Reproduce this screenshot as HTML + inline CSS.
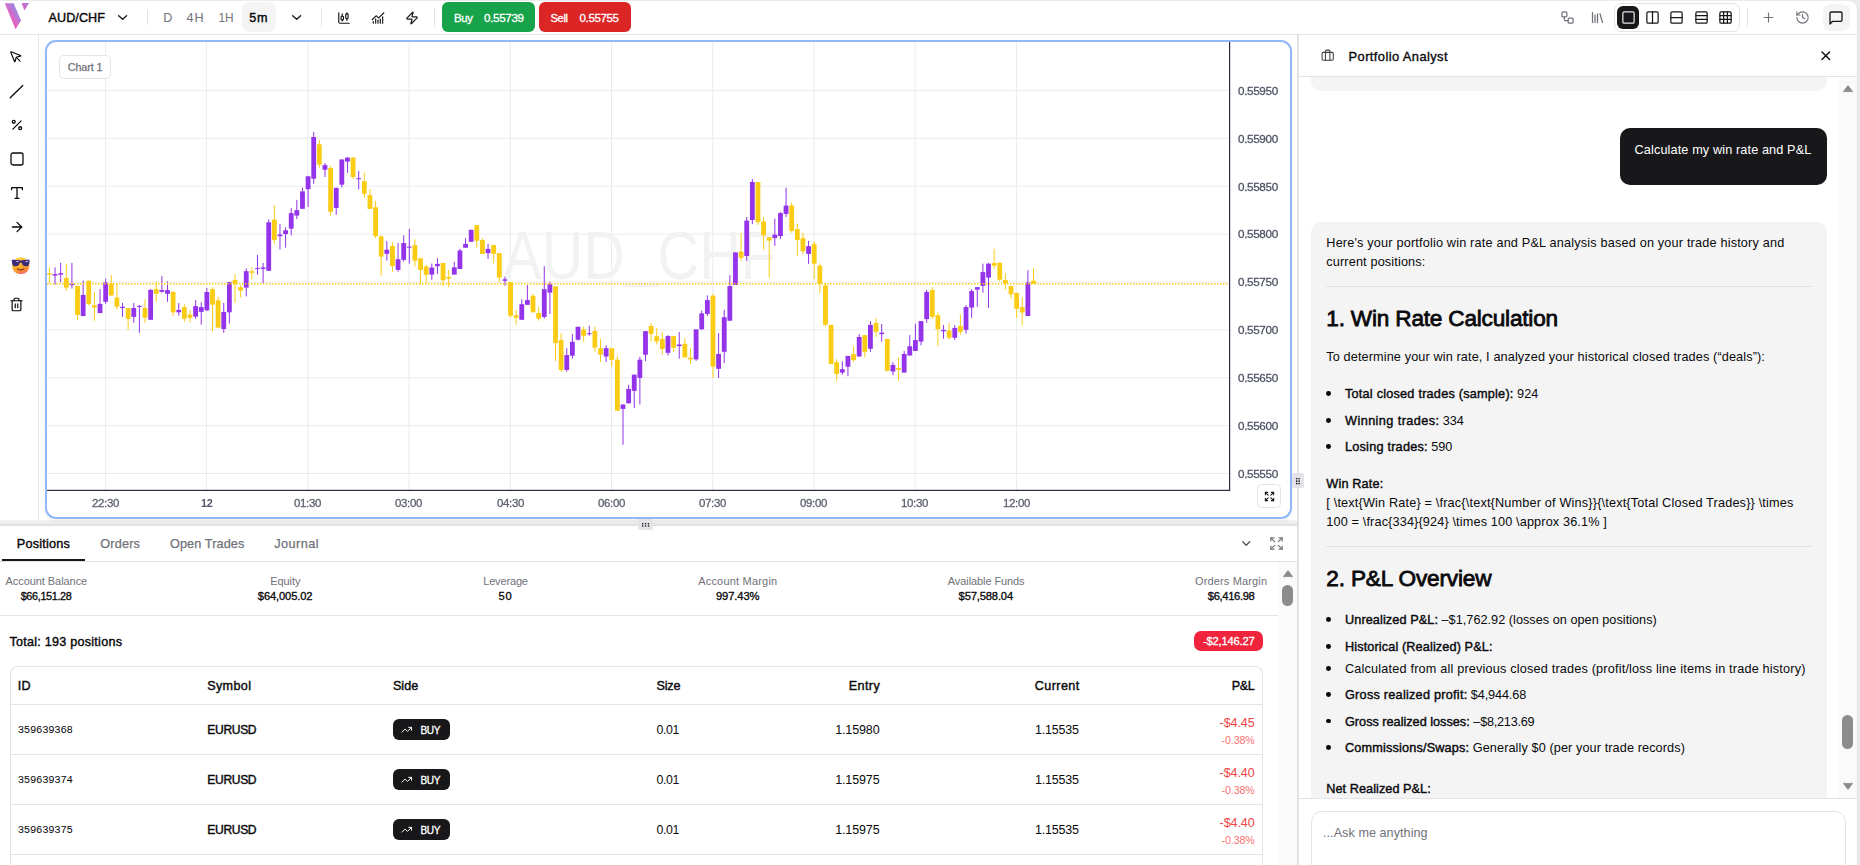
<!DOCTYPE html>
<html>
<head>
<meta charset="utf-8">
<title>Trading</title>
<style>
*{box-sizing:border-box;margin:0;padding:0}
html,body{width:1860px;height:865px;overflow:hidden;background:#ebebeb;font-family:"Liberation Sans",sans-serif;color:#09090b}
.abs{position:absolute}
#app{position:absolute;left:0;top:1px;width:1858px;height:880px;background:#fff;border-right:1px solid #e2e2e4;border-radius:0 9px 0 0;overflow:hidden}
#in{position:absolute;left:0;top:-1px;width:1858px;height:880px}
.t{position:absolute;white-space:pre;line-height:1}
svg{position:absolute;overflow:visible}
#hdr{position:absolute;left:0;top:0;width:1858px;height:35px;border-bottom:1px solid #e4e4e7;background:#fff}
.vsep{position:absolute;width:1px;background:#e4e4e7}
#ltb{position:absolute;left:0;top:34px;width:39px;height:490px;border-right:1px solid #e4e4e7}
#chartbox{position:absolute;left:45px;top:40px;width:1247px;height:479px;border:2px solid #8fb7f9;border-radius:11px;background:#fff;box-shadow:0 2px 4px rgba(0,0,0,.06)}
#hsplit{position:absolute;left:0;top:520px;width:1298px;height:6px;background:linear-gradient(#f3f3f4 0%,#ededee 50%,#e3e3e6 75%,#e1e1e4 100%)}
#vsplit{position:absolute;left:1297.2px;top:35px;width:1.8px;height:840px;background:#e2e2e6}
.grip{position:absolute;background:#e4e4e7;border-radius:2px}
</style>
</head>
<body>
<div id="app"><div id="in">
<div id="hdr">
<svg style="left:4px;top:2.2px" width="26" height="28" viewBox="0 0 26 28"><defs><linearGradient id="lg" x1="0" y1="1" x2="1" y2="0"><stop offset="0" stop-color="#ff4fa8"/><stop offset=".45" stop-color="#e066c4"/><stop offset="1" stop-color="#5aa2ff"/></linearGradient><linearGradient id="lg2" x1="0" y1="1" x2="1" y2="0"><stop offset="0" stop-color="#f35fb6"/><stop offset="1" stop-color="#a07ae8"/></linearGradient></defs><path d="M0.8 1.2 L9.6 1.2 L17 18.6 L11.5 27.2 Z" fill="url(#lg)"/><path d="M17.6 1 L25 1 L20.4 8.6 Z" fill="url(#lg2)"/></svg>
<span class="t" style="top:11px;line-height:14px;font-size:12.6px;left:48.50px;color:#09090b;-webkit-text-stroke:0.4px #09090b;letter-spacing:0.084px;">AUD/CHF</span>
<svg style="left:117.9px;top:15px" width="10" height="6" viewBox="0 0 10 6" fill="none" stroke="#18181b" stroke-width="1.35" stroke-linecap="round" stroke-linejoin="round"><path d="M0.7 0.7l3.95 3.6 3.95-3.600"/></svg>
<div class="vsep" style="left:147px;top:10px;height:15px"></div>
<span class="t" style="top:11px;line-height:14px;font-size:12.6px;left:163.20px;color:#71717a;">D</span>
<span class="t" style="top:11px;line-height:14px;font-size:12.6px;left:186.60px;color:#71717a;letter-spacing:0.793px;">4H</span>
<span class="t" style="top:11px;line-height:14px;font-size:11.9px;left:218.60px;color:#71717a;letter-spacing:-0.312px;">1H</span>
<div class="abs" style="left:242px;top:2px;width:34px;height:30px;background:#f4f4f5;border-radius:8px;"></div>
<span class="t" style="top:11px;line-height:14px;font-size:12.6px;left:249.30px;color:#09090b;-webkit-text-stroke:0.4px #09090b;letter-spacing:0.696px;">5m</span>
<svg style="left:292.3px;top:15px" width="10" height="6" viewBox="0 0 10 6" fill="none" stroke="#18181b" stroke-width="1.35" stroke-linecap="round" stroke-linejoin="round"><path d="M0.7 0.7l3.95 3.6 3.95-3.600"/></svg>
<div class="vsep" style="left:321px;top:8px;height:19px"></div>
<svg style="left:337px;top:10.5px" width="14" height="14" viewBox="0 0 24 24" fill="none" stroke="#18181b" stroke-width="2" stroke-linecap="round" stroke-linejoin="round" ><path d="M9 5v4"/><rect width="4" height="6" x="7" y="9" rx="1"/><path d="M9 15v2"/><path d="M17 3v2"/><rect width="4" height="8" x="15" y="5" rx="1"/><path d="M17 13v3"/><path d="M3 3v16a2 2 0 0 0 2 2h16"/></svg>
<svg style="left:371px;top:10.5px" width="14" height="14" viewBox="0 0 24 24" fill="none" stroke="#18181b" stroke-width="2" stroke-linecap="round" stroke-linejoin="round" ><path d="M12 16v5"/><path d="M16 14v7"/><path d="M20 10v11"/><path d="m22 3-8.646 8.646a.5.5 0 0 1-.708 0L9.354 8.354a.5.5 0 0 0-.707 0L2 15"/><path d="M4 18v3"/><path d="M8 14v7"/></svg>
<svg style="left:405px;top:10.5px" width="14" height="14" viewBox="0 0 24 24" fill="none" stroke="#18181b" stroke-width="2" stroke-linecap="round" stroke-linejoin="round" ><path d="M4 14a1 1 0 0 1-.78-1.63l9.9-10.2a.5.5 0 0 1 .86.46l-1.92 6.02A1 1 0 0 0 13 10h7a1 1 0 0 1 .78 1.63l-9.9 10.2a.5.5 0 0 1-.86-.46l1.92-6.02A1 1 0 0 0 11 14z"/></svg>
<div class="vsep" style="left:434px;top:8px;height:19px"></div>
<div class="abs" style="left:442px;top:2px;width:93px;height:30px;background:#16a34a;border-radius:6px;"></div>
<span class="t" style="top:12px;line-height:12px;font-size:11.4px;left:454.00px;color:#fff;-webkit-text-stroke:0.32px #fff;letter-spacing:-0.322px;">Buy</span>
<span class="t" style="top:12px;line-height:12px;font-size:11.6px;left:484.00px;color:#fff;-webkit-text-stroke:0.32px #fff;letter-spacing:-0.322px;">0.55739</span>
<div class="abs" style="left:539px;top:2px;width:92px;height:30px;background:#dc2626;border-radius:6px;"></div>
<span class="t" style="top:12px;line-height:12px;font-size:11.1px;left:550.50px;color:#fff;-webkit-text-stroke:0.32px #fff;letter-spacing:-0.336px;">Sell</span>
<span class="t" style="top:12px;line-height:12px;font-size:11.5px;left:579.50px;color:#fff;-webkit-text-stroke:0.32px #fff;letter-spacing:-0.345px;">0.55755</span>
<svg style="left:1560px;top:10px" width="15" height="15" viewBox="0 0 24 24" fill="none" stroke="#71717a" stroke-width="2" stroke-linecap="round" stroke-linejoin="round" ><rect width="8" height="8" x="3" y="3" rx="2"/><path d="M7 11v4a2 2 0 0 0 2 2h4"/><rect width="8" height="8" x="13" y="13" rx="2"/></svg>
<svg style="left:1590px;top:10px" width="15" height="15" viewBox="0 0 24 24" fill="none" stroke="#71717a" stroke-width="2" stroke-linecap="round" stroke-linejoin="round" ><path d="m16 6 4 14"/><path d="M12 6v14"/><path d="M8 8v12"/><path d="M4 4v16"/></svg>
<div class="abs" style="left:1614px;top:3px;width:126px;height:29px;border-radius:7px;border:1px solid #e4e4e7;"></div>
<div class="abs" style="left:1617px;top:6px;width:22px;height:23px;background:#18181b;border-radius:6px;"></div>
<svg style="left:1621px;top:10px" width="15" height="15" viewBox="0 0 24 24" fill="none" stroke="#e4e4e7" stroke-width="2" stroke-linecap="round" stroke-linejoin="round" ><rect width="18" height="18" x="3" y="3" rx="2"/></svg>
<svg style="left:1645px;top:10px" width="15" height="15" viewBox="0 0 24 24" fill="none" stroke="#18181b" stroke-width="2" stroke-linecap="round" stroke-linejoin="round" ><rect width="18" height="18" x="3" y="3" rx="2"/><path d="M12 3v18"/></svg>
<svg style="left:1669px;top:10px" width="15" height="15" viewBox="0 0 24 24" fill="none" stroke="#18181b" stroke-width="2" stroke-linecap="round" stroke-linejoin="round" ><rect width="18" height="18" x="3" y="3" rx="2"/><path d="M3 12h18"/></svg>
<svg style="left:1694px;top:10px" width="15" height="15" viewBox="0 0 24 24" fill="none" stroke="#18181b" stroke-width="2" stroke-linecap="round" stroke-linejoin="round" ><rect width="18" height="18" x="3" y="3" rx="2"/><path d="M21 9H3"/><path d="M21 15H3"/></svg>
<svg style="left:1718px;top:10px" width="15" height="15" viewBox="0 0 24 24" fill="none" stroke="#18181b" stroke-width="2" stroke-linecap="round" stroke-linejoin="round" ><rect width="18" height="18" x="3" y="3" rx="2"/><path d="M3 9h18"/><path d="M3 15h18"/><path d="M9 3v18"/><path d="M15 3v18"/></svg>
<div class="vsep" style="left:1747px;top:8px;height:19px"></div>
<svg style="left:1761px;top:10px" width="15" height="15" viewBox="0 0 24 24" fill="none" stroke="#71717a" stroke-width="1.8" stroke-linecap="round" stroke-linejoin="round" ><path d="M5 12h14"/><path d="M12 5v14"/></svg>
<svg style="left:1794.5px;top:10px" width="15" height="15" viewBox="0 0 24 24" fill="none" stroke="#71717a" stroke-width="1.8" stroke-linecap="round" stroke-linejoin="round" ><path d="M3 12a9 9 0 1 0 9-9 9.75 9.75 0 0 0-6.740 2.740L3 8"/><path d="M3 3v5h5"/><path d="M12 7v5l4 2"/></svg>
<div class="abs" style="left:1823px;top:4px;width:27px;height:27px;background:#f4f4f5;border-radius:8px;"></div>
<svg style="left:1828px;top:10px" width="16" height="16" viewBox="0 0 24 24" fill="none" stroke="#18181b" stroke-width="2" stroke-linecap="round" stroke-linejoin="round" ><path d="M21 15a2 2 0 0 1-2 2H7l-4 4V5a2 2 0 0 1 2-2h14a2 2 0 0 1 2 2z"/></svg>
</div>
<div id="ltb">
<svg style="left:9px;top:16px" width="14" height="14" viewBox="0 0 24 24" fill="none" stroke="#09090b" stroke-width="2" stroke-linecap="round" stroke-linejoin="round" ><path d="M12.586 12.586 19 19"/><path d="M3.688 3.037a.497.497 0 0 0-.651.651l6.5 15.999a.501.501 0 0 0 .947-.062l1.569-6.083a2 2 0 0 1 1.448-1.479l6.124-1.579a.5.5 0 0 0 .063-.947z"/></svg>
<svg style="left:9px;top:50px" width="15" height="15" viewBox="0 0 15 15" fill="none" stroke="#09090b" stroke-width="1.3" stroke-linecap="round"><path d="M1.2 13.8L13.8 1.5"/></svg>
<svg style="left:9.5px;top:83.5px" width="14" height="14" viewBox="0 0 24 24" fill="none" stroke="#09090b" stroke-width="2.2" stroke-linecap="round" stroke-linejoin="round" ><line x1="19" x2="5" y1="5" y2="19"/><circle cx="6.5" cy="6.500" r="2.5"/><circle cx="17.5" cy="17.5" r="2.5"/></svg>
<svg style="left:8.5px;top:116.5px" width="16" height="16" viewBox="0 0 24 24" fill="none" stroke="#09090b" stroke-width="1.9" stroke-linecap="round" stroke-linejoin="round" ><rect width="18" height="18" x="3" y="3" rx="3"/></svg>
<svg style="left:8.5px;top:150.5px" width="16" height="16" viewBox="0 0 24 24" fill="none" stroke="#09090b" stroke-width="1.9" stroke-linecap="round" stroke-linejoin="round" ><polyline points="4 7 4 4 20 4 20 7"/><line x1="9" x2="15" y1="20" y2="20"/><line x1="12" x2="12" y1="4" y2="20"/></svg>
<svg style="left:8.5px;top:184.5px" width="16" height="16" viewBox="0 0 24 24" fill="none" stroke="#09090b" stroke-width="1.9" stroke-linecap="round" stroke-linejoin="round" ><path d="M5 12h14"/><path d="m12 5 7 7-7 7"/></svg>
<svg style="left:11px;top:222px" width="20" height="19" viewBox="0 0 20 19"><defs><linearGradient id="eg" x1=".3" y1="0" x2=".6" y2="1"><stop offset="0" stop-color="#ffd23f"/><stop offset=".55" stop-color="#ffae2c"/><stop offset=".85" stop-color="#f9853f"/><stop offset="1" stop-color="#ee5f78"/></linearGradient></defs><rect x="1.1" y="1.600" width="17.2" height="16.5" rx="8" ry="7.800" fill="url(#eg)"/><path d="M0.7 4.300 Q0.500 3.700 1.300 3.800 Q5 3.300 9.700 4.600 Q14.400 3.300 18.100 3.800 Q18.900 3.700 18.700 4.300 L18.300 7.400 Q17.700 10.400 14.600 10.300 Q11.700 10.100 10.700 6.900 Q9.700 5.900 8.700 6.900 Q7.700 10.100 4.800 10.300 Q1.700 10.400 1.100 7.400 Z" fill="#3a2a78"/><path d="M5.200 5.300 L7.200 5.700 M14.800 5.700 L16.800 5.300" stroke="#cfc6f5" stroke-width=".9" stroke-linecap="round" fill="none"/><path d="M6.400 12.800 Q9.700 15.400 13 12.800" fill="none" stroke="#8a3c1c" stroke-width="1.100" stroke-linecap="round"/></svg>
<svg style="left:9px;top:262.5px" width="15" height="15" viewBox="0 0 24 24" fill="none" stroke="#09090b" stroke-width="1.9" stroke-linecap="round" stroke-linejoin="round" ><path d="M3 6h18"/><path d="M19 6v14c0 1-1 2-2 2H7c-1 0-2-1-2-2V6"/><path d="M8 6V4c0-1 1-2 2-2h4c1 0 2 1 2 2v2"/><line x1="10" x2="10" y1="11" y2="17"/><line x1="14" x2="14" y1="11" y2="17"/></svg>
</div>
<div id="hsplit"></div>
<div id="chartbox"></div>
<svg style="left:0;top:0" width="1300" height="520" viewBox="0 0 1300 520"><rect x="47" y="89.90" width="1182.5" height="1" fill="#eaebf0"/><rect x="47" y="137.80" width="1182.5" height="1" fill="#eaebf0"/><rect x="47" y="185.70" width="1182.5" height="1" fill="#eaebf0"/><rect x="47" y="233.60" width="1182.5" height="1" fill="#eaebf0"/><rect x="47" y="281.50" width="1182.5" height="1" fill="#eaebf0"/><rect x="47" y="329.40" width="1182.5" height="1" fill="#eaebf0"/><rect x="47" y="377.30" width="1182.5" height="1" fill="#eaebf0"/><rect x="47" y="425.10" width="1182.5" height="1" fill="#eaebf0"/><rect x="47" y="473.00" width="1182.5" height="1" fill="#eaebf0"/><rect x="104.90" y="42" width="1" height="448" fill="#eaebf0"/><rect x="206.12" y="42" width="1" height="448" fill="#eaebf0"/><rect x="307.34" y="42" width="1" height="448" fill="#eaebf0"/><rect x="408.56" y="42" width="1" height="448" fill="#eaebf0"/><rect x="509.78" y="42" width="1" height="448" fill="#eaebf0"/><rect x="611.00" y="42" width="1" height="448" fill="#eaebf0"/><rect x="712.22" y="42" width="1" height="448" fill="#eaebf0"/><rect x="813.44" y="42" width="1" height="448" fill="#eaebf0"/><rect x="914.66" y="42" width="1" height="448" fill="#eaebf0"/><rect x="1015.88" y="42" width="1" height="448" fill="#eaebf0"/><text x="503.2" y="279" font-family="Liberation Sans, sans-serif" font-size="68" fill="#f2f2f3" textLength="121.8" lengthAdjust="spacingAndGlyphs">AUD</text><text x="657.6" y="279" font-family="Liberation Sans, sans-serif" font-size="68" fill="#f2f2f3" textLength="118.4" lengthAdjust="spacingAndGlyphs">CHF</text><rect x="622.5" y="283.6" width="36.5" height="3.4" fill="#f2f2f3"/><rect x="48.92" y="267.5" width="1" height="15.9" fill="#facc15"/><rect x="47.02" y="273.2" width="4.8" height="1.5" fill="#facc15"/><rect x="54.54" y="267.4" width="1" height="17.3" fill="#9333ea"/><rect x="52.64" y="274.1" width="4.8" height="1.5" fill="#9333ea"/><rect x="60.16" y="262.9" width="1" height="19.3" fill="#9333ea"/><rect x="58.26" y="273.2" width="4.8" height="1.5" fill="#9333ea"/><rect x="65.79" y="263.7" width="1" height="26.9" fill="#facc15"/><rect x="63.89" y="277.9" width="4.8" height="9.7" fill="#facc15"/><rect x="71.41" y="262.9" width="1" height="25.7" fill="#9333ea"/><rect x="69.51" y="283.7" width="4.8" height="1.4" fill="#9333ea"/><rect x="77.03" y="286.0" width="1" height="33.8" fill="#facc15"/><rect x="75.13" y="286.0" width="4.8" height="28.9" fill="#facc15"/><rect x="82.66" y="280.5" width="1" height="35.8" fill="#9333ea"/><rect x="80.76" y="294.9" width="4.8" height="21.1" fill="#9333ea"/><rect x="88.28" y="280.5" width="1" height="25.2" fill="#facc15"/><rect x="86.38" y="280.7" width="4.8" height="23.1" fill="#facc15"/><rect x="93.90" y="292.0" width="1" height="28.7" fill="#facc15"/><rect x="92.00" y="305.1" width="4.8" height="2.5" fill="#facc15"/><rect x="99.53" y="289.1" width="1" height="24.0" fill="#9333ea"/><rect x="97.63" y="303.9" width="4.8" height="9.2" fill="#9333ea"/><rect x="105.15" y="278.7" width="1" height="25.1" fill="#9333ea"/><rect x="103.25" y="282.5" width="4.8" height="19.3" fill="#9333ea"/><rect x="110.77" y="275.0" width="1" height="20.8" fill="#facc15"/><rect x="108.87" y="283.7" width="4.8" height="11.8" fill="#facc15"/><rect x="116.40" y="283.9" width="1" height="25.8" fill="#facc15"/><rect x="114.50" y="297.5" width="4.8" height="9.2" fill="#facc15"/><rect x="122.02" y="303.0" width="1" height="13.9" fill="#9333ea"/><rect x="120.12" y="306.8" width="4.8" height="1.2" fill="#9333ea"/><rect x="127.64" y="308.0" width="1" height="21.9" fill="#facc15"/><rect x="125.74" y="308.0" width="4.8" height="10.8" fill="#facc15"/><rect x="133.27" y="303.0" width="1" height="19.7" fill="#9333ea"/><rect x="131.37" y="308.0" width="4.8" height="8.9" fill="#9333ea"/><rect x="138.89" y="305.1" width="1" height="27.7" fill="#9333ea"/><rect x="136.99" y="305.9" width="4.8" height="1.0" fill="#9333ea"/><rect x="144.51" y="299.3" width="1" height="23.4" fill="#facc15"/><rect x="142.61" y="308.0" width="4.8" height="9.8" fill="#facc15"/><rect x="150.14" y="289.1" width="1" height="30.7" fill="#9333ea"/><rect x="148.24" y="289.9" width="4.8" height="29.9" fill="#9333ea"/><rect x="155.76" y="281.6" width="1" height="20.2" fill="#facc15"/><rect x="153.86" y="289.1" width="4.8" height="4.7" fill="#facc15"/><rect x="161.38" y="276.2" width="1" height="16.4" fill="#9333ea"/><rect x="159.48" y="290.0" width="4.8" height="1.8" fill="#9333ea"/><rect x="167.01" y="281.4" width="1" height="20.4" fill="#9333ea"/><rect x="165.11" y="290.1" width="4.8" height="3.7" fill="#9333ea"/><rect x="172.63" y="290.9" width="1" height="25.2" fill="#facc15"/><rect x="170.73" y="292.0" width="4.8" height="20.3" fill="#facc15"/><rect x="178.25" y="303.0" width="1" height="12.7" fill="#9333ea"/><rect x="176.35" y="309.9" width="4.8" height="2.4" fill="#9333ea"/><rect x="183.88" y="304.2" width="1" height="17.5" fill="#facc15"/><rect x="181.98" y="307.1" width="4.8" height="11.7" fill="#facc15"/><rect x="189.50" y="309.9" width="1" height="12.8" fill="#facc15"/><rect x="187.60" y="314.6" width="4.8" height="3.2" fill="#facc15"/><rect x="195.12" y="300.1" width="1" height="18.7" fill="#9333ea"/><rect x="193.22" y="306.1" width="4.8" height="10.5" fill="#9333ea"/><rect x="200.75" y="302.2" width="1" height="22.4" fill="#9333ea"/><rect x="198.85" y="307.1" width="4.8" height="4.8" fill="#9333ea"/><rect x="206.37" y="288.0" width="1" height="23.1" fill="#9333ea"/><rect x="204.47" y="292.0" width="4.8" height="18.3" fill="#9333ea"/><rect x="211.99" y="287.2" width="1" height="43.9" fill="#facc15"/><rect x="210.09" y="289.1" width="4.8" height="15.6" fill="#facc15"/><rect x="217.62" y="296.6" width="1" height="31.5" fill="#facc15"/><rect x="215.72" y="300.3" width="4.8" height="27.3" fill="#facc15"/><rect x="223.24" y="303.0" width="1" height="29.8" fill="#9333ea"/><rect x="221.34" y="311.9" width="4.8" height="17.1" fill="#9333ea"/><rect x="228.86" y="282.2" width="1" height="41.4" fill="#9333ea"/><rect x="226.96" y="282.2" width="4.8" height="30.1" fill="#9333ea"/><rect x="234.49" y="274.1" width="1" height="28.7" fill="#facc15"/><rect x="232.59" y="279.9" width="4.8" height="4.0" fill="#facc15"/><rect x="240.11" y="285.1" width="1" height="12.4" fill="#facc15"/><rect x="238.21" y="287.2" width="4.8" height="3.4" fill="#facc15"/><rect x="245.73" y="268.3" width="1" height="28.1" fill="#9333ea"/><rect x="243.83" y="271.2" width="4.8" height="16.4" fill="#9333ea"/><rect x="251.36" y="267.4" width="1" height="12.3" fill="#facc15"/><rect x="249.46" y="271.2" width="4.8" height="1.7" fill="#facc15"/><rect x="256.98" y="255.0" width="1" height="19.7" fill="#9333ea"/><rect x="255.08" y="268.1" width="4.8" height="1.0" fill="#9333ea"/><rect x="262.60" y="262.9" width="1" height="20.5" fill="#9333ea"/><rect x="260.70" y="267.4" width="4.8" height="1.5" fill="#9333ea"/><rect x="268.23" y="219.4" width="1" height="51.4" fill="#9333ea"/><rect x="266.33" y="222.3" width="4.8" height="48.5" fill="#9333ea"/><rect x="273.85" y="205.2" width="1" height="38.7" fill="#facc15"/><rect x="271.95" y="219.7" width="4.8" height="20.2" fill="#facc15"/><rect x="279.47" y="224.0" width="1" height="25.5" fill="#9333ea"/><rect x="277.57" y="234.5" width="4.8" height="1.7" fill="#9333ea"/><rect x="285.10" y="227.2" width="1" height="20.5" fill="#9333ea"/><rect x="283.20" y="230.3" width="4.8" height="3.8" fill="#9333ea"/><rect x="290.72" y="208.1" width="1" height="27.2" fill="#9333ea"/><rect x="288.82" y="213.1" width="4.8" height="15.5" fill="#9333ea"/><rect x="296.34" y="199.8" width="1" height="19.3" fill="#9333ea"/><rect x="294.44" y="210.2" width="4.8" height="5.4" fill="#9333ea"/><rect x="301.97" y="187.6" width="1" height="21.2" fill="#9333ea"/><rect x="300.07" y="191.4" width="4.8" height="17.4" fill="#9333ea"/><rect x="307.59" y="175.8" width="1" height="31.1" fill="#9333ea"/><rect x="305.69" y="176.3" width="4.8" height="12.8" fill="#9333ea"/><rect x="313.21" y="131.9" width="1" height="51.9" fill="#9333ea"/><rect x="311.31" y="137.0" width="4.8" height="41.7" fill="#9333ea"/><rect x="318.84" y="139.7" width="1" height="28.0" fill="#facc15"/><rect x="316.94" y="144.3" width="4.8" height="20.4" fill="#facc15"/><rect x="324.46" y="163.0" width="1" height="14.0" fill="#9333ea"/><rect x="322.56" y="165.1" width="4.8" height="4.6" fill="#9333ea"/><rect x="330.08" y="165.9" width="1" height="49.9" fill="#facc15"/><rect x="328.18" y="168.0" width="4.8" height="43.8" fill="#facc15"/><rect x="335.71" y="187.6" width="1" height="27.2" fill="#9333ea"/><rect x="333.81" y="187.9" width="4.8" height="20.0" fill="#9333ea"/><rect x="341.33" y="159.3" width="1" height="28.3" fill="#9333ea"/><rect x="339.43" y="159.5" width="4.8" height="25.2" fill="#9333ea"/><rect x="346.95" y="157.2" width="1" height="15.6" fill="#9333ea"/><rect x="345.05" y="157.6" width="4.8" height="4.0" fill="#9333ea"/><rect x="352.58" y="157.2" width="1" height="21.8" fill="#facc15"/><rect x="350.68" y="157.6" width="4.8" height="19.4" fill="#facc15"/><rect x="358.20" y="170.9" width="1" height="18.5" fill="#9333ea"/><rect x="356.30" y="178.2" width="4.8" height="1.0" fill="#9333ea"/><rect x="363.82" y="172.6" width="1" height="25.1" fill="#facc15"/><rect x="361.92" y="181.3" width="4.8" height="12.5" fill="#facc15"/><rect x="369.45" y="188.8" width="1" height="20.1" fill="#facc15"/><rect x="367.55" y="195.1" width="4.8" height="13.8" fill="#facc15"/><rect x="375.07" y="200.7" width="1" height="37.5" fill="#facc15"/><rect x="373.17" y="207.2" width="4.8" height="29.0" fill="#facc15"/><rect x="380.69" y="235.3" width="1" height="40.4" fill="#facc15"/><rect x="378.79" y="236.4" width="4.8" height="20.2" fill="#facc15"/><rect x="386.32" y="241.0" width="1" height="19.7" fill="#9333ea"/><rect x="384.42" y="249.7" width="4.8" height="4.1" fill="#9333ea"/><rect x="391.94" y="242.2" width="1" height="29.7" fill="#facc15"/><rect x="390.04" y="246.0" width="4.8" height="20.1" fill="#facc15"/><rect x="397.56" y="243.0" width="1" height="28.7" fill="#9333ea"/><rect x="395.66" y="259.2" width="4.8" height="10.7" fill="#9333ea"/><rect x="403.19" y="235.3" width="1" height="26.5" fill="#9333ea"/><rect x="401.29" y="243.1" width="4.8" height="16.7" fill="#9333ea"/><rect x="408.81" y="228.9" width="1" height="34.7" fill="#9333ea"/><rect x="406.91" y="246.6" width="4.8" height="1.1" fill="#9333ea"/><rect x="414.43" y="239.3" width="1" height="27.2" fill="#facc15"/><rect x="412.53" y="245.1" width="4.8" height="15.6" fill="#facc15"/><rect x="420.06" y="258.2" width="1" height="26.0" fill="#facc15"/><rect x="418.16" y="258.2" width="4.8" height="11.7" fill="#facc15"/><rect x="425.68" y="264.7" width="1" height="19.1" fill="#facc15"/><rect x="423.78" y="266.5" width="4.8" height="8.4" fill="#facc15"/><rect x="431.30" y="263.6" width="1" height="16.2" fill="#9333ea"/><rect x="429.40" y="267.6" width="4.8" height="7.0" fill="#9333ea"/><rect x="436.93" y="258.2" width="1" height="15.8" fill="#9333ea"/><rect x="435.03" y="263.9" width="4.8" height="2.3" fill="#9333ea"/><rect x="442.55" y="263.0" width="1" height="23.1" fill="#facc15"/><rect x="440.65" y="263.0" width="4.8" height="17.3" fill="#facc15"/><rect x="448.17" y="269.9" width="1" height="17.0" fill="#facc15"/><rect x="446.27" y="276.9" width="4.8" height="1.7" fill="#facc15"/><rect x="453.80" y="261.8" width="1" height="12.8" fill="#9333ea"/><rect x="451.90" y="267.4" width="4.8" height="7.2" fill="#9333ea"/><rect x="459.42" y="248.8" width="1" height="20.2" fill="#9333ea"/><rect x="457.52" y="250.5" width="4.8" height="18.5" fill="#9333ea"/><rect x="465.04" y="238.2" width="1" height="9.5" fill="#9333ea"/><rect x="463.14" y="243.9" width="4.8" height="3.8" fill="#9333ea"/><rect x="470.67" y="229.8" width="1" height="12.0" fill="#9333ea"/><rect x="468.77" y="229.8" width="4.8" height="12.0" fill="#9333ea"/><rect x="476.29" y="224.9" width="1" height="22.8" fill="#facc15"/><rect x="474.39" y="225.1" width="4.8" height="15.7" fill="#facc15"/><rect x="481.91" y="238.2" width="1" height="15.8" fill="#facc15"/><rect x="480.01" y="240.1" width="4.8" height="13.9" fill="#facc15"/><rect x="487.54" y="243.9" width="1" height="15.1" fill="#9333ea"/><rect x="485.64" y="248.9" width="4.8" height="4.3" fill="#9333ea"/><rect x="493.16" y="245.0" width="1" height="18.6" fill="#facc15"/><rect x="491.26" y="245.0" width="4.8" height="8.8" fill="#facc15"/><rect x="498.78" y="253.1" width="1" height="28.9" fill="#facc15"/><rect x="496.88" y="253.1" width="4.8" height="24.5" fill="#facc15"/><rect x="504.41" y="276.8" width="1" height="8.9" fill="#9333ea"/><rect x="502.51" y="279.3" width="4.8" height="1.5" fill="#9333ea"/><rect x="510.03" y="282.2" width="1" height="35.6" fill="#facc15"/><rect x="508.13" y="282.2" width="4.8" height="33.6" fill="#facc15"/><rect x="515.65" y="310.0" width="1" height="14.6" fill="#facc15"/><rect x="513.75" y="315.3" width="4.8" height="2.5" fill="#facc15"/><rect x="521.28" y="299.3" width="1" height="20.5" fill="#9333ea"/><rect x="519.38" y="304.2" width="4.8" height="15.6" fill="#9333ea"/><rect x="526.90" y="285.1" width="1" height="19.7" fill="#9333ea"/><rect x="525.00" y="300.1" width="4.8" height="4.7" fill="#9333ea"/><rect x="532.52" y="294.0" width="1" height="18.3" fill="#facc15"/><rect x="530.62" y="295.8" width="4.8" height="16.5" fill="#facc15"/><rect x="538.15" y="307.1" width="1" height="13.6" fill="#facc15"/><rect x="536.25" y="312.9" width="4.8" height="5.7" fill="#facc15"/><rect x="543.77" y="266.3" width="1" height="52.3" fill="#9333ea"/><rect x="541.87" y="289.2" width="4.8" height="27.7" fill="#9333ea"/><rect x="549.39" y="281.6" width="1" height="32.4" fill="#9333ea"/><rect x="547.49" y="284.2" width="4.8" height="8.4" fill="#9333ea"/><rect x="555.02" y="286.3" width="1" height="75.0" fill="#facc15"/><rect x="553.12" y="286.3" width="4.8" height="56.8" fill="#facc15"/><rect x="560.64" y="333.2" width="1" height="38.7" fill="#facc15"/><rect x="558.74" y="340.1" width="4.8" height="29.8" fill="#facc15"/><rect x="566.26" y="348.2" width="1" height="23.5" fill="#9333ea"/><rect x="564.36" y="355.1" width="4.8" height="14.8" fill="#9333ea"/><rect x="571.89" y="334.1" width="1" height="24.6" fill="#9333ea"/><rect x="569.99" y="341.8" width="4.8" height="13.9" fill="#9333ea"/><rect x="577.51" y="326.6" width="1" height="13.9" fill="#9333ea"/><rect x="575.61" y="326.8" width="4.8" height="12.9" fill="#9333ea"/><rect x="583.13" y="326.6" width="1" height="15.0" fill="#facc15"/><rect x="581.23" y="329.5" width="4.8" height="6.3" fill="#facc15"/><rect x="588.76" y="325.7" width="1" height="10.1" fill="#9333ea"/><rect x="586.86" y="333.2" width="4.8" height="1.0" fill="#9333ea"/><rect x="594.38" y="326.6" width="1" height="25.2" fill="#facc15"/><rect x="592.48" y="331.0" width="4.8" height="16.7" fill="#facc15"/><rect x="600.00" y="339.1" width="1" height="23.0" fill="#facc15"/><rect x="598.10" y="348.2" width="4.8" height="6.6" fill="#facc15"/><rect x="605.63" y="345.3" width="1" height="16.8" fill="#9333ea"/><rect x="603.73" y="348.2" width="4.8" height="8.3" fill="#9333ea"/><rect x="611.25" y="347.9" width="1" height="18.7" fill="#facc15"/><rect x="609.35" y="348.2" width="4.8" height="11.7" fill="#facc15"/><rect x="616.87" y="355.9" width="1" height="54.8" fill="#facc15"/><rect x="614.97" y="359.7" width="4.8" height="51.0" fill="#facc15"/><rect x="622.50" y="404.5" width="1" height="40.3" fill="#9333ea"/><rect x="620.60" y="404.5" width="4.8" height="4.4" fill="#9333ea"/><rect x="628.12" y="384.8" width="1" height="18.6" fill="#9333ea"/><rect x="626.22" y="388.9" width="4.8" height="14.4" fill="#9333ea"/><rect x="633.74" y="374.5" width="1" height="33.5" fill="#9333ea"/><rect x="631.84" y="374.7" width="4.8" height="16.2" fill="#9333ea"/><rect x="639.37" y="356.8" width="1" height="47.7" fill="#9333ea"/><rect x="637.47" y="359.7" width="4.8" height="18.2" fill="#9333ea"/><rect x="644.99" y="331.2" width="1" height="29.9" fill="#9333ea"/><rect x="643.09" y="331.2" width="4.8" height="23.5" fill="#9333ea"/><rect x="650.61" y="323.1" width="1" height="18.3" fill="#facc15"/><rect x="648.71" y="326.0" width="4.8" height="7.9" fill="#facc15"/><rect x="656.24" y="327.6" width="1" height="16.9" fill="#facc15"/><rect x="654.34" y="336.2" width="4.8" height="5.2" fill="#facc15"/><rect x="661.86" y="332.2" width="1" height="22.5" fill="#facc15"/><rect x="659.96" y="338.9" width="4.8" height="10.1" fill="#facc15"/><rect x="667.48" y="335.2" width="1" height="20.2" fill="#9333ea"/><rect x="665.58" y="336.0" width="4.8" height="16.8" fill="#9333ea"/><rect x="673.11" y="336.0" width="1" height="15.6" fill="#facc15"/><rect x="671.21" y="336.2" width="4.8" height="11.6" fill="#facc15"/><rect x="678.73" y="332.0" width="1" height="26.6" fill="#9333ea"/><rect x="676.83" y="344.5" width="4.8" height="1.6" fill="#9333ea"/><rect x="684.35" y="338.1" width="1" height="19.3" fill="#facc15"/><rect x="682.45" y="343.8" width="4.8" height="13.6" fill="#facc15"/><rect x="689.98" y="348.2" width="1" height="15.8" fill="#facc15"/><rect x="688.08" y="357.6" width="4.8" height="1.8" fill="#facc15"/><rect x="695.60" y="329.4" width="1" height="31.5" fill="#9333ea"/><rect x="693.70" y="329.4" width="4.8" height="30.0" fill="#9333ea"/><rect x="701.22" y="310.5" width="1" height="19.4" fill="#9333ea"/><rect x="699.32" y="313.4" width="4.8" height="15.9" fill="#9333ea"/><rect x="706.85" y="295.3" width="1" height="20.8" fill="#9333ea"/><rect x="704.95" y="300.1" width="4.8" height="13.8" fill="#9333ea"/><rect x="712.47" y="294.0" width="1" height="83.8" fill="#facc15"/><rect x="710.57" y="295.8" width="4.8" height="70.8" fill="#facc15"/><rect x="718.09" y="333.0" width="1" height="45.0" fill="#9333ea"/><rect x="716.19" y="353.9" width="4.8" height="14.9" fill="#9333ea"/><rect x="723.72" y="309.8" width="1" height="53.3" fill="#9333ea"/><rect x="721.82" y="317.2" width="4.8" height="34.6" fill="#9333ea"/><rect x="729.34" y="275.2" width="1" height="45.5" fill="#9333ea"/><rect x="727.44" y="286.1" width="4.8" height="34.6" fill="#9333ea"/><rect x="734.96" y="252.4" width="1" height="32.6" fill="#9333ea"/><rect x="733.06" y="252.4" width="4.8" height="32.6" fill="#9333ea"/><rect x="740.59" y="233.1" width="1" height="27.8" fill="#facc15"/><rect x="738.69" y="251.6" width="4.8" height="6.3" fill="#facc15"/><rect x="746.21" y="217.0" width="1" height="43.9" fill="#9333ea"/><rect x="744.31" y="220.6" width="4.8" height="35.4" fill="#9333ea"/><rect x="751.83" y="179.0" width="1" height="45.1" fill="#9333ea"/><rect x="749.93" y="182.0" width="4.8" height="38.0" fill="#9333ea"/><rect x="757.46" y="182.0" width="1" height="42.9" fill="#facc15"/><rect x="755.56" y="182.0" width="4.8" height="40.1" fill="#facc15"/><rect x="763.08" y="217.0" width="1" height="32.7" fill="#facc15"/><rect x="761.18" y="221.5" width="4.8" height="13.9" fill="#facc15"/><rect x="768.70" y="237.3" width="1" height="40.6" fill="#facc15"/><rect x="766.80" y="237.3" width="4.8" height="3.3" fill="#facc15"/><rect x="774.33" y="218.5" width="1" height="27.4" fill="#9333ea"/><rect x="772.43" y="234.6" width="4.8" height="3.5" fill="#9333ea"/><rect x="779.95" y="212.1" width="1" height="27.0" fill="#9333ea"/><rect x="778.05" y="213.1" width="4.8" height="23.0" fill="#9333ea"/><rect x="785.57" y="187.6" width="1" height="29.3" fill="#9333ea"/><rect x="783.67" y="205.6" width="4.8" height="8.3" fill="#9333ea"/><rect x="791.20" y="202.3" width="1" height="30.5" fill="#facc15"/><rect x="789.30" y="205.6" width="4.8" height="25.3" fill="#facc15"/><rect x="796.82" y="223.4" width="1" height="32.6" fill="#facc15"/><rect x="794.92" y="229.1" width="4.8" height="10.8" fill="#facc15"/><rect x="802.44" y="232.8" width="1" height="21.4" fill="#facc15"/><rect x="800.54" y="238.1" width="4.8" height="13.1" fill="#facc15"/><rect x="808.07" y="240.9" width="1" height="23.0" fill="#9333ea"/><rect x="806.17" y="246.2" width="4.8" height="7.7" fill="#9333ea"/><rect x="813.69" y="241.4" width="1" height="37.6" fill="#facc15"/><rect x="811.79" y="244.1" width="4.8" height="19.5" fill="#facc15"/><rect x="819.31" y="263.5" width="1" height="29.3" fill="#facc15"/><rect x="817.41" y="265.7" width="4.8" height="18.1" fill="#facc15"/><rect x="824.94" y="283.5" width="1" height="42.9" fill="#facc15"/><rect x="823.04" y="285.4" width="4.8" height="39.3" fill="#facc15"/><rect x="830.56" y="324.9" width="1" height="39.1" fill="#facc15"/><rect x="828.66" y="324.9" width="4.8" height="39.1" fill="#facc15"/><rect x="836.18" y="359.3" width="1" height="21.7" fill="#facc15"/><rect x="834.28" y="362.2" width="4.8" height="11.8" fill="#facc15"/><rect x="841.81" y="361.3" width="1" height="13.3" fill="#9333ea"/><rect x="839.91" y="369.2" width="4.8" height="3.4" fill="#9333ea"/><rect x="847.43" y="355.9" width="1" height="20.4" fill="#9333ea"/><rect x="845.53" y="355.9" width="4.8" height="10.8" fill="#9333ea"/><rect x="853.05" y="346.3" width="1" height="15.6" fill="#facc15"/><rect x="851.15" y="354.0" width="4.8" height="6.1" fill="#facc15"/><rect x="858.68" y="334.1" width="1" height="22.6" fill="#9333ea"/><rect x="856.78" y="337.0" width="4.8" height="19.4" fill="#9333ea"/><rect x="864.30" y="335.1" width="1" height="22.5" fill="#facc15"/><rect x="862.40" y="335.1" width="4.8" height="16.7" fill="#facc15"/><rect x="869.92" y="321.1" width="1" height="30.7" fill="#9333ea"/><rect x="868.02" y="324.9" width="4.8" height="23.9" fill="#9333ea"/><rect x="875.55" y="318.3" width="1" height="18.5" fill="#facc15"/><rect x="873.65" y="322.9" width="4.8" height="8.9" fill="#facc15"/><rect x="881.17" y="324.0" width="1" height="17.6" fill="#9333ea"/><rect x="879.27" y="332.7" width="4.8" height="1.4" fill="#9333ea"/><rect x="886.79" y="339.0" width="1" height="32.5" fill="#facc15"/><rect x="884.89" y="339.0" width="4.8" height="31.8" fill="#facc15"/><rect x="892.42" y="362.2" width="1" height="13.0" fill="#9333ea"/><rect x="890.52" y="365.0" width="4.8" height="6.5" fill="#9333ea"/><rect x="898.04" y="357.6" width="1" height="23.4" fill="#facc15"/><rect x="896.14" y="368.0" width="4.8" height="1.7" fill="#facc15"/><rect x="903.66" y="351.1" width="1" height="21.4" fill="#9333ea"/><rect x="901.76" y="354.0" width="4.8" height="18.5" fill="#9333ea"/><rect x="909.29" y="335.1" width="1" height="20.4" fill="#9333ea"/><rect x="907.39" y="346.3" width="4.8" height="9.2" fill="#9333ea"/><rect x="914.91" y="324.0" width="1" height="26.9" fill="#9333ea"/><rect x="913.01" y="340.1" width="4.8" height="10.8" fill="#9333ea"/><rect x="920.53" y="321.1" width="1" height="24.2" fill="#9333ea"/><rect x="918.63" y="321.1" width="4.8" height="20.5" fill="#9333ea"/><rect x="926.16" y="290.0" width="1" height="32.9" fill="#9333ea"/><rect x="924.26" y="291.9" width="4.8" height="27.2" fill="#9333ea"/><rect x="931.78" y="287.1" width="1" height="31.8" fill="#facc15"/><rect x="929.88" y="290.0" width="4.8" height="26.8" fill="#facc15"/><rect x="937.40" y="312.4" width="1" height="33.6" fill="#facc15"/><rect x="935.50" y="315.2" width="4.8" height="14.1" fill="#facc15"/><rect x="943.03" y="325.0" width="1" height="13.8" fill="#9333ea"/><rect x="941.13" y="329.9" width="4.8" height="1.4" fill="#9333ea"/><rect x="948.65" y="323.0" width="1" height="17.0" fill="#facc15"/><rect x="946.75" y="330.5" width="4.8" height="7.2" fill="#facc15"/><rect x="954.27" y="325.0" width="1" height="15.0" fill="#9333ea"/><rect x="952.37" y="327.9" width="4.8" height="9.8" fill="#9333ea"/><rect x="959.90" y="314.3" width="1" height="20.5" fill="#facc15"/><rect x="958.00" y="325.9" width="4.8" height="6.0" fill="#facc15"/><rect x="965.52" y="305.1" width="1" height="28.5" fill="#9333ea"/><rect x="963.62" y="307.1" width="4.8" height="22.7" fill="#9333ea"/><rect x="971.14" y="289.1" width="1" height="28.7" fill="#9333ea"/><rect x="969.24" y="291.1" width="4.8" height="16.5" fill="#9333ea"/><rect x="976.77" y="287.1" width="1" height="19.7" fill="#9333ea"/><rect x="974.87" y="287.1" width="4.8" height="2.6" fill="#9333ea"/><rect x="982.39" y="263.7" width="1" height="28.9" fill="#9333ea"/><rect x="980.49" y="272.1" width="4.8" height="13.8" fill="#9333ea"/><rect x="988.01" y="262.8" width="1" height="45.1" fill="#9333ea"/><rect x="986.11" y="263.7" width="4.8" height="13.9" fill="#9333ea"/><rect x="993.64" y="248.7" width="1" height="20.2" fill="#facc15"/><rect x="991.74" y="263.1" width="4.8" height="2.6" fill="#facc15"/><rect x="999.26" y="262.0" width="1" height="19.3" fill="#facc15"/><rect x="997.36" y="262.9" width="4.8" height="16.8" fill="#facc15"/><rect x="1004.88" y="273.2" width="1" height="16.5" fill="#facc15"/><rect x="1002.98" y="280.1" width="4.8" height="3.3" fill="#facc15"/><rect x="1010.51" y="286.0" width="1" height="12.4" fill="#facc15"/><rect x="1008.61" y="286.0" width="4.8" height="8.3" fill="#facc15"/><rect x="1016.13" y="292.9" width="1" height="25.1" fill="#facc15"/><rect x="1014.23" y="292.9" width="4.8" height="15.9" fill="#facc15"/><rect x="1021.75" y="297.5" width="1" height="27.2" fill="#facc15"/><rect x="1019.85" y="307.1" width="4.8" height="5.4" fill="#facc15"/><rect x="1027.38" y="270.3" width="1" height="45.7" fill="#9333ea"/><rect x="1025.48" y="282.5" width="4.8" height="33.5" fill="#9333ea"/><rect x="1033.00" y="268.3" width="1" height="15.6" fill="#facc15"/><rect x="1031.10" y="280.7" width="4.8" height="3.2" fill="#facc15"/><line x1="47" x2="1229" y1="283.8" y2="283.8" stroke="#facc15" stroke-width="1.4" stroke-dasharray="1.5 1.5"/><rect x="1229" y="42" width="1.2" height="449" fill="#2b2b43"/><rect x="47" y="489.8" width="1183" height="1.2" fill="#2b2b43"/></svg>
<span class="t" style="top:84px;line-height:13px;font-size:11.7px;left:1238.00px;color:#4f5465;-webkit-text-stroke:0.3px #4f5465;letter-spacing:-0.349px;will-change:transform;">0.55950</span>
<span class="t" style="top:132px;line-height:13px;font-size:11.7px;left:1238.00px;color:#4f5465;-webkit-text-stroke:0.3px #4f5465;letter-spacing:-0.349px;will-change:transform;">0.55900</span>
<span class="t" style="top:180px;line-height:13px;font-size:11.7px;left:1238.00px;color:#4f5465;-webkit-text-stroke:0.3px #4f5465;letter-spacing:-0.349px;will-change:transform;">0.55850</span>
<span class="t" style="top:227px;line-height:13px;font-size:11.7px;left:1238.00px;color:#4f5465;-webkit-text-stroke:0.3px #4f5465;letter-spacing:-0.349px;will-change:transform;">0.55800</span>
<span class="t" style="top:275px;line-height:13px;font-size:11.7px;left:1238.00px;color:#4f5465;-webkit-text-stroke:0.3px #4f5465;letter-spacing:-0.349px;will-change:transform;">0.55750</span>
<span class="t" style="top:323px;line-height:13px;font-size:11.7px;left:1238.00px;color:#4f5465;-webkit-text-stroke:0.3px #4f5465;letter-spacing:-0.349px;will-change:transform;">0.55700</span>
<span class="t" style="top:371px;line-height:13px;font-size:11.7px;left:1238.00px;color:#4f5465;-webkit-text-stroke:0.3px #4f5465;letter-spacing:-0.349px;will-change:transform;">0.55650</span>
<span class="t" style="top:419px;line-height:13px;font-size:11.7px;left:1238.00px;color:#4f5465;-webkit-text-stroke:0.3px #4f5465;letter-spacing:-0.349px;will-change:transform;">0.55600</span>
<span class="t" style="top:467px;line-height:13px;font-size:11.7px;left:1238.00px;color:#4f5465;-webkit-text-stroke:0.3px #4f5465;letter-spacing:-0.349px;will-change:transform;">0.55550</span>
<span class="t" style="top:497px;line-height:12px;font-size:11.5px;left:91.70px;color:#5d6270;-webkit-text-stroke:0.3px #5d6270;letter-spacing:-0.345px;will-change:transform;">22:30</span>
<span class="t" style="top:497px;line-height:12px;font-size:10.9px;left:200.72px;font-weight:700;color:#52576a;letter-spacing:-0.324px;will-change:transform;">12</span>
<span class="t" style="top:497px;line-height:12px;font-size:11.5px;left:294.14px;color:#5d6270;-webkit-text-stroke:0.3px #5d6270;letter-spacing:-0.345px;will-change:transform;">01:30</span>
<span class="t" style="top:497px;line-height:12px;font-size:11.5px;left:395.36px;color:#5d6270;-webkit-text-stroke:0.3px #5d6270;letter-spacing:-0.345px;will-change:transform;">03:00</span>
<span class="t" style="top:497px;line-height:12px;font-size:11.5px;left:496.58px;color:#5d6270;-webkit-text-stroke:0.3px #5d6270;letter-spacing:-0.345px;will-change:transform;">04:30</span>
<span class="t" style="top:497px;line-height:12px;font-size:11.5px;left:597.80px;color:#5d6270;-webkit-text-stroke:0.3px #5d6270;letter-spacing:-0.345px;will-change:transform;">06:00</span>
<span class="t" style="top:497px;line-height:12px;font-size:11.5px;left:699.02px;color:#5d6270;-webkit-text-stroke:0.3px #5d6270;letter-spacing:-0.345px;will-change:transform;">07:30</span>
<span class="t" style="top:497px;line-height:12px;font-size:11.5px;left:800.24px;color:#5d6270;-webkit-text-stroke:0.3px #5d6270;letter-spacing:-0.345px;will-change:transform;">09:00</span>
<span class="t" style="top:497px;line-height:12px;font-size:11.5px;left:901.46px;color:#5d6270;-webkit-text-stroke:0.3px #5d6270;letter-spacing:-0.345px;will-change:transform;">10:30</span>
<span class="t" style="top:497px;line-height:12px;font-size:11.5px;left:1002.68px;color:#5d6270;-webkit-text-stroke:0.3px #5d6270;letter-spacing:-0.345px;will-change:transform;">12:00</span>
<div class="abs" style="left:59px;top:55px;width:52px;height:24px;background:#fff;border-radius:5px;border:1px solid #e4e4e7;"></div>
<span class="t" style="top:61px;line-height:12px;font-size:10.8px;left:67.70px;color:#71717a;-webkit-text-stroke:0.25px #71717a;letter-spacing:-0.086px;">Chart 1</span>
<div class="abs" style="left:1257px;top:484px;width:24px;height:24px;background:#fff;border-radius:4.5px;border:1px solid #e4e4e7;"></div>
<svg style="left:1264.2px;top:491.4px" width="11" height="11" viewBox="0 0 24 24" fill="none" stroke="#18181b" stroke-width="2.4" stroke-linecap="round" stroke-linejoin="round" ><path d="m15 15 6 6"/><path d="m15 9 6-6"/><path d="M21 16v5h-5"/><path d="M21 8V3h-5"/><path d="M3 16v5h5"/><path d="m3 21 6-6"/><path d="M3 8V3h5"/><path d="M9 9 3 3"/></svg>
<div id="vsplit"></div>
<div class="grip" style="left:1292px;top:473px;width:12px;height:15px"></div>
<svg style="left:1295.700px;top:477.700px" width="4" height="7" viewBox="0 0 4 7"><circle cx="0.7" cy="0.7" r=".8" fill="#09090b"/><circle cx="0.7" cy="3.1500000000000004" r=".8" fill="#09090b"/><circle cx="0.7" cy="5.6000000000000005" r=".8" fill="#09090b"/><circle cx="3.0999999999999996" cy="0.7" r=".8" fill="#09090b"/><circle cx="3.0999999999999996" cy="3.1500000000000004" r=".8" fill="#09090b"/><circle cx="3.0999999999999996" cy="5.6000000000000005" r=".8" fill="#09090b"/></svg>
<div class="grip" style="left:638px;top:519px;width:15px;height:11px;border-radius:0 0 2px 2px"></div>
<svg style="left:641.8px;top:522.7px" width="7" height="4" viewBox="0 0 7 4"><circle cx="0.7" cy="0.7" r=".8" fill="#09090b"/><circle cx="3.5999999999999996" cy="0.7" r=".8" fill="#09090b"/><circle cx="6.5" cy="0.7" r=".8" fill="#09090b"/><circle cx="0.7" cy="3.0" r=".8" fill="#09090b"/><circle cx="3.5999999999999996" cy="3.0" r=".8" fill="#09090b"/><circle cx="6.5" cy="3.0" r=".8" fill="#09090b"/></svg>
<span class="t" style="top:537px;line-height:14px;font-size:12.7px;left:16.80px;color:#09090b;-webkit-text-stroke:0.4px #09090b;letter-spacing:0.208px;">Positions</span>
<span class="t" style="top:537px;line-height:14px;font-size:12.7px;left:100.20px;color:#71717a;-webkit-text-stroke:0.25px #71717a;letter-spacing:0.197px;">Orders</span>
<span class="t" style="top:537px;line-height:14px;font-size:12.7px;left:170.00px;color:#71717a;-webkit-text-stroke:0.25px #71717a;letter-spacing:0.098px;">Open Trades</span>
<span class="t" style="top:537px;line-height:14px;font-size:12.7px;left:274.20px;color:#71717a;-webkit-text-stroke:0.25px #71717a;letter-spacing:0.441px;">Journal</span>
<div class="abs" style="left:2px;top:559px;width:83px;height:2px;background:#18181b;"></div>
<div class="abs" style="left:0px;top:561px;width:1297px;height:1px;background:#e4e4e7;"></div>
<svg style="left:1242.300px;top:541px" width="10" height="6" viewBox="0 0 10 6" fill="none" stroke="#52525b" stroke-width="1.3" stroke-linecap="round" stroke-linejoin="round"><path d="M0.7 0.7l3.500 3.500 3.500-3.500"/></svg>
<svg style="left:1269px;top:536px" width="15" height="15" viewBox="0 0 24 24" fill="none" stroke="#71717a" stroke-width="1.9" stroke-linecap="round" stroke-linejoin="round" ><path d="m15 15 6 6"/><path d="m15 9 6-6"/><path d="M21 16v5h-5"/><path d="M21 8V3h-5"/><path d="M3 16v5h5"/><path d="m3 21 6-6"/><path d="M3 8V3h5"/><path d="M9 9 3 3"/></svg>
<div class="abs" style="left:1278px;top:562px;width:19px;height:310px;background:#fafafa;"></div>
<svg style="left:1282.5px;top:570px" width="10" height="7" viewBox="0 0 10 7"><path d="M5 0.600 L9.600 6.600 H0.400 Z" fill="#8a8a8a" stroke="#8a8a8a" stroke-width=".8" stroke-linejoin="round"/></svg>
<div class="abs" style="left:1282px;top:585px;width:11px;height:21px;background:#8c8c8c;border-radius:5.5px;"></div>
<span class="t" style="top:575px;line-height:12px;font-size:11px;left:5.50px;color:#71717a;letter-spacing:-0.061px;">Account Balance</span>
<span class="t" style="top:590px;line-height:12px;font-size:10.8px;left:20.70px;color:#09090b;-webkit-text-stroke:0.32px #09090b;letter-spacing:-0.328px;">$66,151.28</span>
<span class="t" style="top:575px;line-height:12px;font-size:11px;left:270.20px;color:#71717a;letter-spacing:-0.074px;">Equity</span>
<span class="t" style="top:590px;line-height:12px;font-size:11.2px;left:257.80px;color:#09090b;-webkit-text-stroke:0.32px #09090b;letter-spacing:-0.139px;">$64,005.02</span>
<span class="t" style="top:575px;line-height:12px;font-size:11px;left:483.20px;color:#71717a;letter-spacing:-0.153px;">Leverage</span>
<span class="t" style="top:590px;line-height:12px;font-size:11.2px;left:498.60px;color:#09090b;-webkit-text-stroke:0.32px #09090b;letter-spacing:0.742px;">50</span>
<span class="t" style="top:575px;line-height:12px;font-size:11px;left:698.20px;color:#71717a;letter-spacing:0.198px;">Account Margin</span>
<span class="t" style="top:590px;line-height:12px;font-size:11.2px;left:716.00px;color:#09090b;-webkit-text-stroke:0.32px #09090b;letter-spacing:-0.119px;">997.43%</span>
<span class="t" style="top:575px;line-height:12px;font-size:11px;left:947.80px;color:#71717a;letter-spacing:-0.091px;">Available Funds</span>
<span class="t" style="top:590px;line-height:12px;font-size:11.2px;left:958.60px;color:#09090b;-webkit-text-stroke:0.32px #09090b;letter-spacing:-0.162px;">$57,588.04</span>
<span class="t" style="top:575px;line-height:12px;font-size:11px;left:1195.00px;color:#71717a;letter-spacing:0.142px;">Orders Margin</span>
<span class="t" style="top:590px;line-height:12px;font-size:11.2px;left:1207.80px;color:#09090b;-webkit-text-stroke:0.32px #09090b;letter-spacing:-0.353px;">$6,416.98</span>
<div class="abs" style="left:0px;top:615px;width:1278px;height:1px;background:#e4e4e7;"></div>
<span class="t" style="top:635px;line-height:14px;font-size:12.6px;left:9.50px;color:#09090b;-webkit-text-stroke:0.4px #09090b;letter-spacing:0.244px;">Total: 193 positions</span>
<div class="abs" style="left:1194px;top:631px;width:69px;height:20px;background:#f0243c;border-radius:7px;"></div>
<span class="t" style="top:635px;line-height:12px;font-size:11.2px;left:1203.00px;color:#fff;-webkit-text-stroke:0.32px #fff;letter-spacing:-0.195px;">-$2,146.27</span>
<div class="abs" style="left:9.5px;top:666px;width:1253.5px;height:210px;border-radius:8px;border:1px solid #e4e4e7;border-bottom:none;"></div>
<div class="abs" style="left:10px;top:704px;width:1252.5px;height:1px;background:#e4e4e7;"></div>
<div class="abs" style="left:10px;top:754px;width:1252.5px;height:1px;background:#e4e4e7;"></div>
<div class="abs" style="left:10px;top:804px;width:1252.5px;height:1px;background:#e4e4e7;"></div>
<div class="abs" style="left:10px;top:854px;width:1252.5px;height:1px;background:#e4e4e7;"></div>
<span class="t" style="top:679px;line-height:14px;font-size:12.6px;left:17.70px;color:#09090b;-webkit-text-stroke:0.4px #09090b;letter-spacing:0.300px;">ID</span>
<span class="t" style="top:679px;line-height:14px;font-size:12.6px;left:207.20px;color:#09090b;-webkit-text-stroke:0.4px #09090b;letter-spacing:0.357px;">Symbol</span>
<span class="t" style="top:679px;line-height:14px;font-size:12.6px;left:392.90px;color:#09090b;-webkit-text-stroke:0.4px #09090b;letter-spacing:0.060px;">Side</span>
<span class="t" style="top:679px;line-height:14px;font-size:12.6px;left:656.40px;color:#09090b;-webkit-text-stroke:0.4px #09090b;letter-spacing:-0.137px;">Size</span>
<span class="t" style="top:679px;line-height:14px;font-size:12.6px;left:848.70px;color:#09090b;-webkit-text-stroke:0.4px #09090b;letter-spacing:0.423px;">Entry</span>
<span class="t" style="top:679px;line-height:14px;font-size:12.6px;left:1034.80px;color:#09090b;-webkit-text-stroke:0.4px #09090b;letter-spacing:0.398px;">Current</span>
<span class="t" style="top:679px;line-height:14px;font-size:12.5px;left:1231.80px;color:#09090b;-webkit-text-stroke:0.4px #09090b;letter-spacing:-0.313px;">P&amp;L</span>
<span class="t" style="top:724px;line-height:12px;font-size:10.6px;left:17.70px;color:#09090b;letter-spacing:-0.244px;font-family:'Liberation Mono',monospace;">359639368</span>
<span class="t" style="top:723px;line-height:14px;font-size:12.1px;left:207.30px;color:#09090b;-webkit-text-stroke:0.4px #09090b;letter-spacing:-0.359px;">EURUSD</span>
<div class="abs" style="left:393px;top:719px;width:57px;height:21px;background:#18181b;border-radius:6px;"></div>
<svg style="left:401px;top:724px" width="11.5" height="11.5" viewBox="0 0 24 24" fill="none" stroke="#fff" stroke-width="2" stroke-linecap="round" stroke-linejoin="round" ><polyline points="22 7 13.5 15.5 8.5 10.5 2 17"/><polyline points="16 7 22 7 22 13"/></svg>
<span class="t" style="top:725px;line-height:11px;font-size:10.1px;left:420.40px;color:#fff;-webkit-text-stroke:0.32px #fff;letter-spacing:-0.334px;">BUY</span>
<span class="t" style="top:723px;line-height:14px;font-size:12.3px;left:656.40px;color:#09090b;letter-spacing:-0.346px;">0.01</span>
<span class="t" style="top:723px;line-height:14px;font-size:12.5px;left:835.20px;color:#09090b;letter-spacing:-0.131px;">1.15980</span>
<span class="t" style="top:723px;line-height:14px;font-size:12.5px;left:1035.00px;color:#09090b;letter-spacing:-0.197px;">1.15535</span>
<span class="t" style="top:716px;line-height:14px;font-size:12.5px;left:1219.60px;color:#ef4444;letter-spacing:-0.069px;">-$4.45</span>
<span class="t" style="top:734px;line-height:12px;font-size:10.6px;left:1221.50px;color:#f87171;letter-spacing:-0.077px;">-0.38%</span>
<span class="t" style="top:774px;line-height:12px;font-size:10.6px;left:17.70px;color:#09090b;letter-spacing:-0.244px;font-family:'Liberation Mono',monospace;">359639374</span>
<span class="t" style="top:773px;line-height:14px;font-size:12.1px;left:207.30px;color:#09090b;-webkit-text-stroke:0.4px #09090b;letter-spacing:-0.359px;">EURUSD</span>
<div class="abs" style="left:393px;top:769px;width:57px;height:21px;background:#18181b;border-radius:6px;"></div>
<svg style="left:401px;top:774px" width="11.5" height="11.5" viewBox="0 0 24 24" fill="none" stroke="#fff" stroke-width="2" stroke-linecap="round" stroke-linejoin="round" ><polyline points="22 7 13.5 15.5 8.5 10.5 2 17"/><polyline points="16 7 22 7 22 13"/></svg>
<span class="t" style="top:775px;line-height:11px;font-size:10.1px;left:420.40px;color:#fff;-webkit-text-stroke:0.32px #fff;letter-spacing:-0.334px;">BUY</span>
<span class="t" style="top:773px;line-height:14px;font-size:12.3px;left:656.40px;color:#09090b;letter-spacing:-0.346px;">0.01</span>
<span class="t" style="top:773px;line-height:14px;font-size:12.5px;left:835.20px;color:#09090b;letter-spacing:-0.131px;">1.15975</span>
<span class="t" style="top:773px;line-height:14px;font-size:12.5px;left:1035.00px;color:#09090b;letter-spacing:-0.197px;">1.15535</span>
<span class="t" style="top:766px;line-height:14px;font-size:12.5px;left:1219.60px;color:#ef4444;letter-spacing:-0.069px;">-$4.40</span>
<span class="t" style="top:784px;line-height:12px;font-size:10.6px;left:1221.50px;color:#f87171;letter-spacing:-0.077px;">-0.38%</span>
<span class="t" style="top:824px;line-height:12px;font-size:10.6px;left:17.70px;color:#09090b;letter-spacing:-0.244px;font-family:'Liberation Mono',monospace;">359639375</span>
<span class="t" style="top:823px;line-height:14px;font-size:12.1px;left:207.30px;color:#09090b;-webkit-text-stroke:0.4px #09090b;letter-spacing:-0.359px;">EURUSD</span>
<div class="abs" style="left:393px;top:819px;width:57px;height:21px;background:#18181b;border-radius:6px;"></div>
<svg style="left:401px;top:824px" width="11.5" height="11.5" viewBox="0 0 24 24" fill="none" stroke="#fff" stroke-width="2" stroke-linecap="round" stroke-linejoin="round" ><polyline points="22 7 13.5 15.5 8.5 10.5 2 17"/><polyline points="16 7 22 7 22 13"/></svg>
<span class="t" style="top:825px;line-height:11px;font-size:10.1px;left:420.40px;color:#fff;-webkit-text-stroke:0.32px #fff;letter-spacing:-0.334px;">BUY</span>
<span class="t" style="top:823px;line-height:14px;font-size:12.3px;left:656.40px;color:#09090b;letter-spacing:-0.346px;">0.01</span>
<span class="t" style="top:823px;line-height:14px;font-size:12.5px;left:835.20px;color:#09090b;letter-spacing:-0.131px;">1.15975</span>
<span class="t" style="top:823px;line-height:14px;font-size:12.5px;left:1035.00px;color:#09090b;letter-spacing:-0.197px;">1.15535</span>
<span class="t" style="top:816px;line-height:14px;font-size:12.5px;left:1219.60px;color:#ef4444;letter-spacing:-0.069px;">-$4.40</span>
<span class="t" style="top:834px;line-height:12px;font-size:10.6px;left:1221.50px;color:#f87171;letter-spacing:-0.077px;">-0.38%</span>
<svg style="left:1320.8px;top:48.6px" width="13.4" height="13.4" viewBox="0 0 24 24" fill="none" stroke="#3f3f46" stroke-width="1.9" stroke-linecap="round" stroke-linejoin="round" ><path d="M16 20V4a2 2 0 0 0-2-2h-4a2 2 0 0 0-2 2v16"/><rect width="20" height="14" x="2" y="6" rx="2"/></svg>
<span class="t" style="top:49px;line-height:15px;font-size:12.9px;left:1348.60px;color:#09090b;letter-spacing:0.406px;-webkit-text-stroke:.35px #09090b;">Portfolio Analyst</span>
<svg style="left:1820.6px;top:51px" width="10" height="10" viewBox="0 0 10 10" fill="none" stroke="#09090b" stroke-width="1.35" stroke-linecap="round"><path d="M1 1l7.600 7.600M8.600 1l-7.600 7.600"/></svg>
<div class="abs" style="left:1299px;top:76px;width:558px;height:1px;background:#e4e4e7;"></div>
<div class="abs" style="left:1838px;top:77px;width:19px;height:721px;background:#fafafa;"></div>
<svg style="left:1842.5px;top:84.500px" width="10" height="7" viewBox="0 0 10 7"><path d="M5 0.600 L9.600 6.600 H0.400 Z" fill="#8a8a8a" stroke="#8a8a8a" stroke-width=".8" stroke-linejoin="round"/></svg>
<svg style="left:1842.5px;top:782.5px" width="10" height="7" viewBox="0 0 10 7"><path d="M5 6.400 L9.600 0.400 H0.400 Z" fill="#8a8a8a" stroke="#8a8a8a" stroke-width=".8" stroke-linejoin="round"/></svg>
<div class="abs" style="left:1842px;top:715px;width:11px;height:34px;background:#8c8c8c;border-radius:5.5px;"></div>
<div class="abs" style="left:1311px;top:60px;width:516px;height:31px;background:#f4f4f5;border-radius:10px;clip-path:inset(17px 0 0 0);"></div>
<div class="abs" style="left:1620px;top:128px;width:207px;height:57px;background:#18181b;border-radius:10px;"></div>
<span class="t" style="top:143px;line-height:14px;font-size:12.7px;left:1634.60px;color:#fff;letter-spacing:0.116px;">Calculate my win rate and P&amp;L</span>
<div class="abs" style="left:1311px;top:222px;width:516px;height:620px;background:#f4f4f5;border-radius:10px;clip-path:inset(0 0 44px 0);"></div>
<span class="t" style="top:236px;line-height:14px;font-size:12.7px;left:1326.30px;color:#09090b;letter-spacing:0.177px;">Here's your portfolio win rate and P&amp;L analysis based on your trade history and</span>
<span class="t" style="top:255px;line-height:14px;font-size:12.7px;left:1326.30px;color:#09090b;letter-spacing:0.141px;">current positions:</span>
<div class="abs" style="left:1326px;top:286px;width:486px;height:1px;background:#e2e2e5;"></div>
<span class="t" style="top:306px;line-height:25px;font-size:22.6px;left:1326.30px;color:#09090b;-webkit-text-stroke:0.8px #09090b;letter-spacing:-0.193px;">1. Win Rate Calculation</span>
<span class="t" style="top:350px;line-height:14px;font-size:12.7px;left:1326.30px;color:#09090b;letter-spacing:0.117px;">To determine your win rate, I analyzed your historical closed trades (“deals”):</span>
<div class="abs" style="left:1326.4px;top:391.1px;width:4.8px;height:4.8px;border-radius:50%;background:#09090b"></div>
<span class="t" style="top:387px;line-height:14px;font-size:12.7px;left:1345.00px;color:#09090b;-webkit-text-stroke:0.4px #09090b;letter-spacing:0.220px;">Total closed trades (sample):</span><span class="t" style="top:387px;line-height:14px;font-size:12.7px;left:1517.03px;color:#09090b;letter-spacing:0.091px;">924</span>
<div class="abs" style="left:1326.4px;top:418.1px;width:4.8px;height:4.8px;border-radius:50%;background:#09090b"></div>
<span class="t" style="top:414px;line-height:14px;font-size:12.7px;left:1345.00px;color:#09090b;-webkit-text-stroke:0.4px #09090b;letter-spacing:0.426px;">Winning trades:</span><span class="t" style="top:414px;line-height:14px;font-size:12.7px;left:1442.73px;color:#09090b;letter-spacing:-0.009px;">334</span>
<div class="abs" style="left:1326.4px;top:444.40000000000003px;width:4.8px;height:4.8px;border-radius:50%;background:#09090b"></div>
<span class="t" style="top:440px;line-height:14px;font-size:12.7px;left:1345.00px;color:#09090b;-webkit-text-stroke:0.4px #09090b;letter-spacing:0.217px;">Losing trades:</span><span class="t" style="top:440px;line-height:14px;font-size:12.7px;left:1431.13px;color:#09090b;letter-spacing:-0.009px;">590</span>
<span class="t" style="top:477px;line-height:14px;font-size:12.7px;left:1326.30px;color:#09090b;-webkit-text-stroke:0.4px #09090b;letter-spacing:0.156px;">Win Rate:</span>
<span class="t" style="top:496px;line-height:14px;font-size:12.7px;left:1326.30px;color:#09090b;letter-spacing:0.170px;">[ \text{Win Rate} = \frac{\text{Number of Wins}}{\text{Total Closed Trades}} \times</span>
<span class="t" style="top:515px;line-height:14px;font-size:12.7px;left:1326.30px;color:#09090b;letter-spacing:0.138px;">100 = \frac{334}{924} \times 100 \approx 36.1% ]</span>
<div class="abs" style="left:1326px;top:546px;width:486px;height:1px;background:#e2e2e5;"></div>
<span class="t" style="top:566px;line-height:25px;font-size:22.6px;left:1326.30px;color:#09090b;-webkit-text-stroke:0.8px #09090b;letter-spacing:-0.155px;">2. P&amp;L Overview</span>
<div class="abs" style="left:1326.4px;top:617.1px;width:4.8px;height:4.8px;border-radius:50%;background:#09090b"></div>
<span class="t" style="top:613px;line-height:14px;font-size:12.7px;left:1345.00px;color:#09090b;-webkit-text-stroke:0.4px #09090b;letter-spacing:0.088px;">Unrealized P&amp;L:</span><span class="t" style="top:613px;line-height:14px;font-size:12.7px;left:1441.53px;color:#09090b;letter-spacing:0.023px;">–$1,762.92 (losses on open positions)</span>
<div class="abs" style="left:1326.4px;top:644.1px;width:4.8px;height:4.8px;border-radius:50%;background:#09090b"></div>
<span class="t" style="top:640px;line-height:14px;font-size:12.7px;left:1345.00px;color:#09090b;-webkit-text-stroke:0.4px #09090b;letter-spacing:0.117px;">Historical (Realized) P&amp;L:</span>
<div class="abs" style="left:1326.4px;top:666.1px;width:4.8px;height:4.8px;border-radius:50%;background:#09090b"></div>
<span class="t" style="top:662px;line-height:14px;font-size:12.7px;left:1345.00px;color:#09090b;letter-spacing:0.178px;">Calculated from all previous closed trades (profit/loss line items in trade history)</span>
<div class="abs" style="left:1326.4px;top:692.1px;width:4.8px;height:4.8px;border-radius:50%;background:#09090b"></div>
<span class="t" style="top:688px;line-height:14px;font-size:12.7px;left:1345.00px;color:#09090b;-webkit-text-stroke:0.4px #09090b;letter-spacing:0.245px;">Gross realized profit:</span><span class="t" style="top:688px;line-height:14px;font-size:12.7px;left:1470.83px;color:#09090b;letter-spacing:-0.128px;">$4,944.68</span>
<div class="abs" style="left:1326.4px;top:718.6px;width:4.8px;height:4.8px;border-radius:50%;background:#09090b"></div>
<span class="t" style="top:715px;line-height:14px;font-size:12.7px;left:1345.00px;color:#09090b;-webkit-text-stroke:0.4px #09090b;letter-spacing:-0.006px;">Gross realized losses:</span><span class="t" style="top:715px;line-height:14px;font-size:12.7px;left:1473.33px;color:#09090b;letter-spacing:-0.243px;">–$8,213.69</span>
<div class="abs" style="left:1326.4px;top:744.9px;width:4.8px;height:4.8px;border-radius:50%;background:#09090b"></div>
<span class="t" style="top:741px;line-height:14px;font-size:12.7px;left:1345.00px;color:#09090b;-webkit-text-stroke:0.4px #09090b;letter-spacing:0.165px;">Commissions/Swaps:</span><span class="t" style="top:741px;line-height:14px;font-size:12.7px;left:1472.73px;color:#09090b;letter-spacing:0.095px;">Generally $0 (per your trade records)</span>
<span class="t" style="top:782px;line-height:14px;font-size:12.7px;left:1326.30px;color:#09090b;-webkit-text-stroke:0.4px #09090b;letter-spacing:0.046px;">Net Realized P&amp;L:</span>
<div class="abs" style="left:1299px;top:798px;width:558px;height:80px;background:#fff;"></div>
<div class="abs" style="left:1299px;top:798px;width:558px;height:1px;background:#e4e4e7;"></div>
<div class="abs" style="left:1311px;top:811px;width:535px;height:70px;background:#fff;border-radius:11px;border:1px solid #e4e4e7;"></div>
<span class="t" style="top:826px;line-height:14px;font-size:12.6px;left:1323.00px;color:#71717a;letter-spacing:0.056px;">...Ask me anything</span>
</div></div>
</body>
</html>
